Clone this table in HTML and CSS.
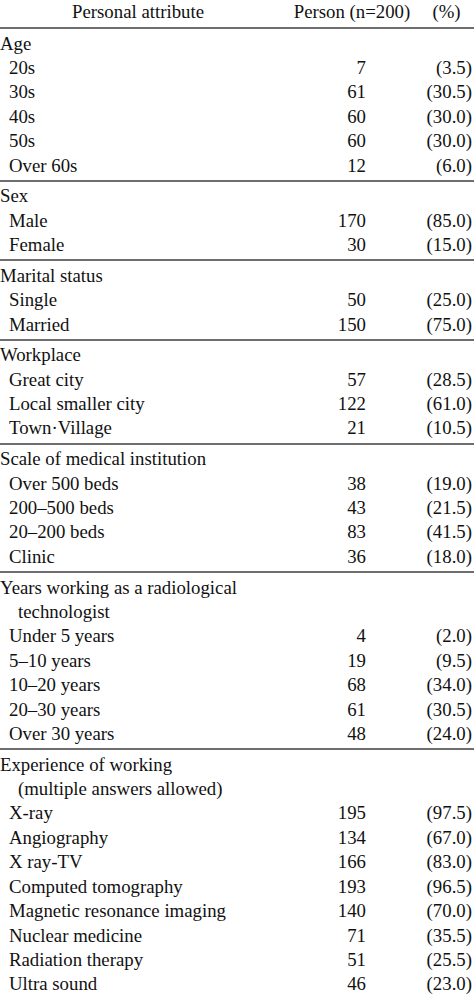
FILE: index.html
```html
<!DOCTYPE html>
<html lang="en">
<head>
<meta charset="utf-8">
<title>Personal attributes</title>
<link rel="stylesheet" href="styles.css">
</head>
<body>
<div class="tbl">
  <div class="row head">
    <div class="c1">Personal attribute</div>
    <div class="c2">Person (n=200)</div>
    <div class="c3">(%)</div>
  </div>

  <div class="group">
    <div class="row"><div class="c1 cat">Age</div></div>
    <div class="row"><div class="c1 sub">20s</div><div class="c2">7</div><div class="c3">(3.5)</div></div>
    <div class="row"><div class="c1 sub">30s</div><div class="c2">61</div><div class="c3">(30.5)</div></div>
    <div class="row"><div class="c1 sub">40s</div><div class="c2">60</div><div class="c3">(30.0)</div></div>
    <div class="row"><div class="c1 sub">50s</div><div class="c2">60</div><div class="c3">(30.0)</div></div>
    <div class="row"><div class="c1 sub">Over 60s</div><div class="c2">12</div><div class="c3">(6.0)</div></div>
  </div>

  <div class="group">
    <div class="row"><div class="c1 cat">Sex</div></div>
    <div class="row"><div class="c1 sub">Male</div><div class="c2">170</div><div class="c3">(85.0)</div></div>
    <div class="row"><div class="c1 sub">Female</div><div class="c2">30</div><div class="c3">(15.0)</div></div>
  </div>

  <div class="group">
    <div class="row"><div class="c1 cat">Marital status</div></div>
    <div class="row"><div class="c1 sub">Single</div><div class="c2">50</div><div class="c3">(25.0)</div></div>
    <div class="row"><div class="c1 sub">Married</div><div class="c2">150</div><div class="c3">(75.0)</div></div>
  </div>

  <div class="group">
    <div class="row"><div class="c1 cat">Workplace</div></div>
    <div class="row"><div class="c1 sub">Great city</div><div class="c2">57</div><div class="c3">(28.5)</div></div>
    <div class="row"><div class="c1 sub">Local smaller city</div><div class="c2">122</div><div class="c3">(61.0)</div></div>
    <div class="row"><div class="c1 sub">Town·Village</div><div class="c2">21</div><div class="c3">(10.5)</div></div>
  </div>

  <div class="group">
    <div class="row"><div class="c1 cat">Scale of medical institution</div></div>
    <div class="row"><div class="c1 sub">Over 500 beds</div><div class="c2">38</div><div class="c3">(19.0)</div></div>
    <div class="row"><div class="c1 sub">200–500 beds</div><div class="c2">43</div><div class="c3">(21.5)</div></div>
    <div class="row"><div class="c1 sub">20–200 beds</div><div class="c2">83</div><div class="c3">(41.5)</div></div>
    <div class="row"><div class="c1 sub">Clinic</div><div class="c2">36</div><div class="c3">(18.0)</div></div>
  </div>

  <div class="group">
    <div class="row tall"><div class="c1 cat hang">Years working as a radiological<br>technologist</div></div>
    <div class="row"><div class="c1 sub">Under 5 years</div><div class="c2">4</div><div class="c3">(2.0)</div></div>
    <div class="row"><div class="c1 sub">5–10 years</div><div class="c2">19</div><div class="c3">(9.5)</div></div>
    <div class="row"><div class="c1 sub">10–20 years</div><div class="c2">68</div><div class="c3">(34.0)</div></div>
    <div class="row"><div class="c1 sub">20–30 years</div><div class="c2">61</div><div class="c3">(30.5)</div></div>
    <div class="row"><div class="c1 sub">Over 30 years</div><div class="c2">48</div><div class="c3">(24.0)</div></div>
  </div>

  <div class="group last">
    <div class="row tall"><div class="c1 cat hang">Experience of working<br>(multiple answers allowed)</div></div>
    <div class="row"><div class="c1 sub">X-ray</div><div class="c2">195</div><div class="c3">(97.5)</div></div>
    <div class="row"><div class="c1 sub">Angiography</div><div class="c2">134</div><div class="c3">(67.0)</div></div>
    <div class="row"><div class="c1 sub">X ray-TV</div><div class="c2">166</div><div class="c3">(83.0)</div></div>
    <div class="row"><div class="c1 sub">Computed tomography</div><div class="c2">193</div><div class="c3">(96.5)</div></div>
    <div class="row"><div class="c1 sub">Magnetic resonance imaging</div><div class="c2">140</div><div class="c3">(70.0)</div></div>
    <div class="row"><div class="c1 sub">Nuclear medicine</div><div class="c2">71</div><div class="c3">(35.5)</div></div>
    <div class="row"><div class="c1 sub">Radiation therapy</div><div class="c2">51</div><div class="c3">(25.5)</div></div>
    <div class="row"><div class="c1 sub">Ultra sound</div><div class="c2">46</div><div class="c3">(23.0)</div></div>
  </div>
</div>
</body>
</html>
```

FILE: styles.css
```css
html, body {
  margin: 0;
  padding: 0;
  background: #ffffff;
  overflow: hidden;
}

.tbl {
  width: 474px;
  font-family: "Liberation Serif", "Times New Roman", serif;
  font-size: 18.8px;
  color: #111111;
}

.row {
  display: grid;
  grid-template-columns: 276px 145px 52px;
  line-height: 24.4px;
  min-height: 24.4px;
  white-space: nowrap;
}

.head {
  padding-bottom: 2.6px;
  border-bottom: 2px solid #6e6e6e;
}

.head .c1 {
  text-align: center;
}

.head .c2 {
  text-align: center;
  padding-left: 7px;
  padding-right: 0;
}

.head .c3 {
  text-align: center;
}

.group {
  padding-top: 2.5px;
  padding-bottom: 1.8px;
  border-bottom: 2px solid #6e6e6e;
}

.group.last {
  border-bottom: none;
}

.c1 {
  text-align: left;
}

.c1.sub {
  padding-left: 9px;
}

.c1.hang {
  padding-left: 18px;
  text-indent: -18px;
}

.c2 {
  text-align: right;
  padding-right: 55px;
}

.c3 {
  text-align: right;
  padding-right: 1px;
}
```
